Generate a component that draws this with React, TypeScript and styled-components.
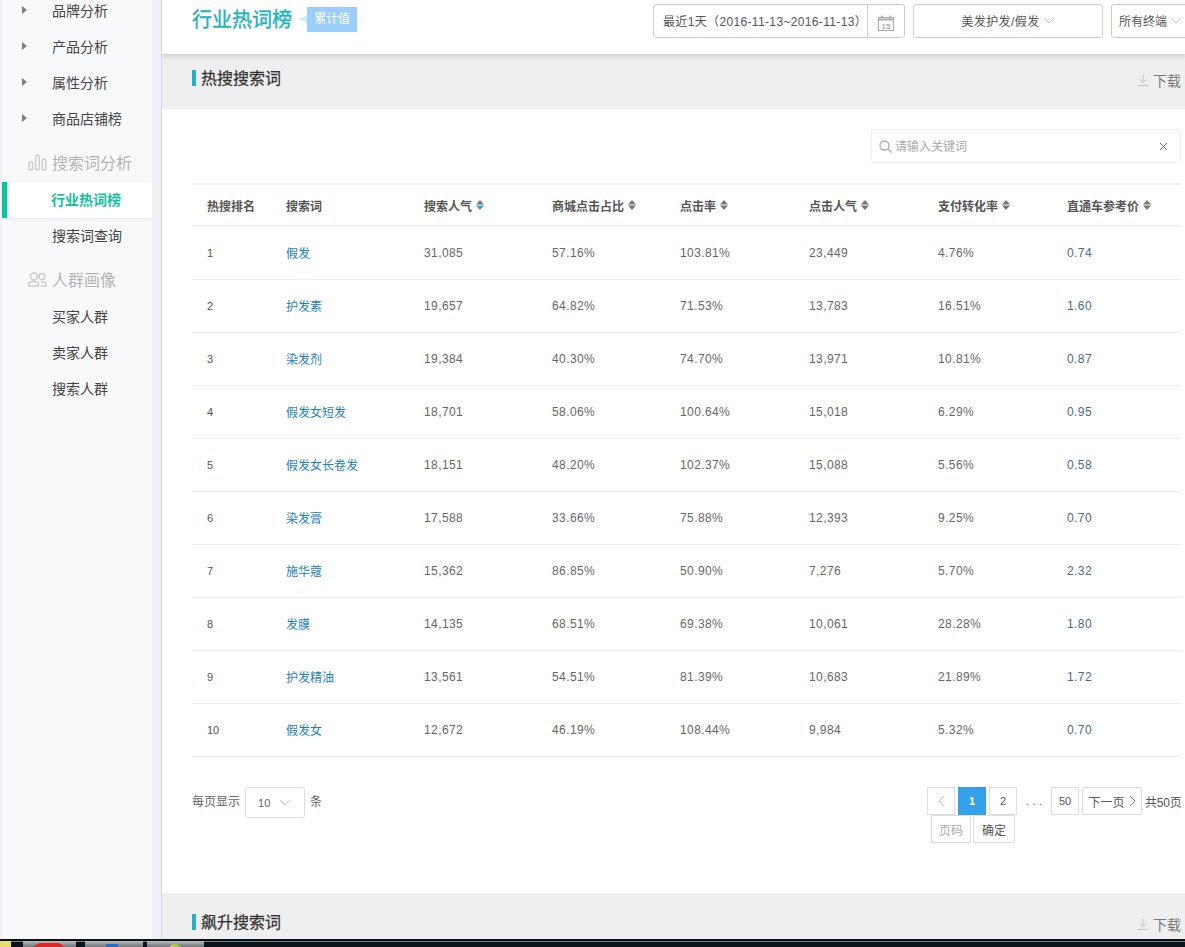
import { ReactNode } from 'react';
import styled, { createGlobalStyle } from 'styled-components';

const FONT = '"Liberation Sans", "Noto Sans CJK SC", sans-serif';

type Row = {
  rank: number;
  word: string;
  search: string;
  mall: string;
  click: string;
  clicks: string;
  pay: string;
  price: string;
};

const rows: Row[] = [
  { rank: 1, word: '假发', search: '31,085', mall: '57.16%', click: '103.81%', clicks: '23,449', pay: '4.76%', price: '0.74' },
  { rank: 2, word: '护发素', search: '19,657', mall: '64.82%', click: '71.53%', clicks: '13,783', pay: '16.51%', price: '1.60' },
  { rank: 3, word: '染发剂', search: '19,384', mall: '40.30%', click: '74.70%', clicks: '13,971', pay: '10.81%', price: '0.87' },
  { rank: 4, word: '假发女短发', search: '18,701', mall: '58.06%', click: '100.64%', clicks: '15,018', pay: '6.29%', price: '0.95' },
  { rank: 5, word: '假发女长卷发', search: '18,151', mall: '48.20%', click: '102.37%', clicks: '15,088', pay: '5.56%', price: '0.58' },
  { rank: 6, word: '染发膏', search: '17,588', mall: '33.66%', click: '75.88%', clicks: '12,393', pay: '9.25%', price: '0.70' },
  { rank: 7, word: '施华蔻', search: '15,362', mall: '86.85%', click: '50.90%', clicks: '7,276', pay: '5.70%', price: '2.32' },
  { rank: 8, word: '发膜', search: '14,135', mall: '68.51%', click: '69.38%', clicks: '10,061', pay: '28.28%', price: '1.80' },
  { rank: 9, word: '护发精油', search: '13,561', mall: '54.51%', click: '81.39%', clicks: '10,683', pay: '21.89%', price: '1.72' },
  { rank: 10, word: '假发女', search: '12,672', mall: '46.19%', click: '108.44%', clicks: '9,984', pay: '5.32%', price: '0.70' },
];

const columns = '94px 138px 128px 128px 129px 129px 129px 114px';

const GlobalStyle = createGlobalStyle`
  html, body {
    margin: 0;
    padding: 0;
    height: 947px;
    overflow: hidden;
    background: #fff;
    font-family: ${FONT};
    font-size: 12px;
    color: #555;
  }
  * { box-sizing: border-box; }
`;

function SortIcon({ active }: { active?: boolean }) {
  return (
    <SortSvg viewBox="0 0 8 10">
      <path d="M4 0 L8 4.5 L0 4.5 Z" fill="#777" />
      <path d="M0 5.5 L8 5.5 L4 10 Z" fill={active ? '#3a9be8' : '#777'} />
    </SortSvg>
  );
}

function Chevron({ color = '#c8c8c8' }: { color?: string }) {
  return (
    <ChevronSvg viewBox="0 0 12 7">
      <path d="M1 1 L6 6 L11 1" fill="none" stroke={color} />
    </ChevronSvg>
  );
}

function DownloadLink() {
  return (
    <Download>
      <svg width="12" height="12" viewBox="0 0 12 12">
        <path d="M6 0.5 V8 M2.5 5 L6 8.5 L9.5 5 M0.5 11.5 H11.5" fill="none" stroke="#c4c4c4" />
      </svg>
      下载
    </Download>
  );
}

function SectionHeader({ children, tall }: { children: ReactNode; tall?: boolean }) {
  return (
    <SectionBar $tall={tall}>
      <SectionTitle>{children}</SectionTitle>
      <DownloadLink />
    </SectionBar>
  );
}

export default function App() {
  return (
    <>
      <GlobalStyle />
      <Page>
        <Body>
          <Sidebar>
            <SideInner>
              <ArrowItem>品牌分析</ArrowItem>
              <ArrowItem>产品分析</ArrowItem>
              <ArrowItem>属性分析</ArrowItem>
              <ArrowItem>商品店铺榜</ArrowItem>
              <GroupTitle>
                <svg width="19" height="17" viewBox="0 0 19 17">
                  <g fill="none" stroke="#cbcbcb" strokeWidth="1.4">
                    <rect x="1" y="8" width="3.6" height="8" rx="1.8" />
                    <rect x="7.6" y="1" width="3.6" height="15" rx="1.8" />
                    <rect x="14.2" y="5" width="3.6" height="11" rx="1.8" />
                  </g>
                </svg>
                搜索词分析
              </GroupTitle>
              <ActiveItem>行业热词榜</ActiveItem>
              <SubItem>搜索词查询</SubItem>
              <GroupTitle $people>
                <svg width="19" height="15" viewBox="0 0 19 15">
                  <g fill="none" stroke="#cbcbcb" strokeWidth="1.5">
                    <circle cx="6" cy="4.5" r="3.4" />
                    <circle cx="14" cy="4.5" r="3" />
                    <path d="M1 14 V12.5 C1 10.5 3 9.5 6 9.5 C9 9.5 10.5 10.5 10.5 12.5 V14 Z" />
                    <path d="M13 9.5 C16 9.5 18 10.5 18 12.5 V14 H12.5" />
                  </g>
                </svg>
                人群画像
              </GroupTitle>
              <SubItem>买家人群</SubItem>
              <SubItem>卖家人群</SubItem>
              <SubItem>搜索人群</SubItem>
            </SideInner>
          </Sidebar>
          <Main>
            <TopBar>
              <TitleGroup>
                <PageTitle>行业热词榜</PageTitle>
                <Tag>累计值</Tag>
              </TitleGroup>
              <TopControls>
                <DateBox>
                  <DateText>最近1天（2016-11-13~2016-11-13）</DateText>
                  <CalendarCell>
                    <svg width="16" height="16" viewBox="0 0 16 16">
                      <rect x="0.5" y="2.5" width="15" height="13" fill="none" stroke="#aaa" />
                      <path d="M0.5 4.5 H15.5" stroke="#aaa" strokeWidth="2" fill="none" />
                      <path d="M4 0.5 V3 M12 0.5 V3" stroke="#888" fill="none" />
                      <text x="8" y="13.5" fontSize="8" textAnchor="middle" fill="#888" fontFamily="Liberation Sans">15</text>
                    </svg>
                  </CalendarCell>
                </DateBox>
                <CategorySelect>美发护发/假发 <Chevron /></CategorySelect>
                <TerminalSelect>所有终端 <Chevron /></TerminalSelect>
              </TopControls>
            </TopBar>
            <SectionHeader>热搜搜索词</SectionHeader>
            <Content>
              <SearchRow>
                <SearchBox>
                  <svg width="13" height="13" viewBox="0 0 13 13">
                    <circle cx="5.5" cy="5.5" r="4.5" fill="none" stroke="#aaa" strokeWidth="1.3" />
                    <path d="M9 9 L12.5 12.5" stroke="#aaa" strokeWidth="1.3" />
                  </svg>
                  <SearchHint>请输入关键词</SearchHint>
                  <svg width="9" height="9" viewBox="0 0 9 9">
                    <path d="M1 1 L8 8 M8 1 L1 8" stroke="#666" />
                  </svg>
                </SearchBox>
              </SearchRow>
              <TableHead>
                <HeadCell>热搜排名</HeadCell>
                <HeadCell>搜索词</HeadCell>
                <HeadCell>搜索人气 <SortIcon active /></HeadCell>
                <HeadCell>商城点击占比 <SortIcon /></HeadCell>
                <HeadCell>点击率 <SortIcon /></HeadCell>
                <HeadCell>点击人气 <SortIcon /></HeadCell>
                <HeadCell>支付转化率 <SortIcon /></HeadCell>
                <HeadCell>直通车参考价 <SortIcon /></HeadCell>
              </TableHead>
              {rows.map((row) => (
                <TableRow key={row.rank}>
                  <RankCell>{row.rank}</RankCell>
                  <WordCell>{row.word}</WordCell>
                  <Cell>{row.search}</Cell>
                  <Cell>{row.mall}</Cell>
                  <Cell>{row.click}</Cell>
                  <Cell>{row.clicks}</Cell>
                  <Cell>{row.pay}</Cell>
                  <PriceCell>{row.price}</PriceCell>
                </TableRow>
              ))}
              <Footer>
                <PageSize>
                  <SizeLabel>每页显示</SizeLabel>
                  <SizeSelect>10 <Chevron /></SizeSelect>
                  <SizeLabel>条</SizeLabel>
                </PageSize>
                <Pager>
                  <PagerLine>
                    <PageButton $muted>
                      <svg width="7" height="12" viewBox="0 0 7 12">
                        <path d="M6 1 L1 6 L6 11" fill="none" stroke="#c8c8c8" />
                      </svg>
                    </PageButton>
                    <PageButton $current>1</PageButton>
                    <PageButton>2</PageButton>
                    <Dots>. . .</Dots>
                    <PageButton>50</PageButton>
                    <NextButton>
                      下一页
                      <svg width="7" height="12" viewBox="0 0 7 12">
                        <path d="M1 1 L6 6 L1 11" fill="none" stroke="#777" />
                      </svg>
                    </NextButton>
                    <PageTotal>共50页</PageTotal>
                  </PagerLine>
                  <JumpLine>
                    <JumpInput>页码</JumpInput>
                    <JumpButton>确定</JumpButton>
                  </JumpLine>
                </Pager>
              </Footer>
            </Content>
            <SectionHeader tall>飙升搜索词</SectionHeader>
          </Main>
        </Body>
        <Taskbar>
          <StartEdge />
          <TaskButton $width={53} $gap={0}><RedBlob /></TaskButton>
          <TaskButton $width={58} $gap={9}><BlueBlob /></TaskButton>
          <TaskButton $width={57} $gap={4}><GreenBlob /></TaskButton>
        </Taskbar>
      </Page>
    </>
  );
}

const Page = styled.div`
  display: flex;
  flex-direction: column;
  width: 1185px;
  height: 947px;
  overflow: hidden;
`;

const Body = styled.div`
  display: flex;
  flex: 1;
  min-height: 0;
`;

const Sidebar = styled.aside`
  flex: 0 0 162px;
  padding-left: 2px;
  background: #eef0f6;
  border-right: 1px solid #d5d7dc;
`;

const SideInner = styled.nav`
  width: 150px;
  height: 100%;
  background: #f8f9fb;
  margin-right: 9px;
  overflow: hidden;
`;

const SubItem = styled.div`
  height: 36px;
  padding-left: 50px;
  line-height: 36px;
  font-size: 14px;
  color: #444;
`;

const ArrowItem = styled(SubItem)`
  position: relative;
  &:first-child { margin-top: -7px; }
  &::before {
    content: '';
    position: absolute;
    left: 20px;
    top: 13px;
    border-left: 5px solid #808080;
    border-top: 4.5px solid transparent;
    border-bottom: 4.5px solid transparent;
  }
`;

const GroupTitle = styled.div<{ $people?: boolean }>`
  display: flex;
  align-items: center;
  gap: 5px;
  height: 36px;
  margin-top: 7px;
  margin-bottom: 2px;
  padding-left: 26px;
  font-size: 16px;
  color: #b4b4b4;
`;

const ActiveItem = styled.div`
  height: 36px;
  padding-left: 44px;
  line-height: 36px;
  font-size: 14px;
  font-weight: 700;
  color: #10c29b;
  background: #fff;
  border-left: 5px solid #00c79c;
  box-shadow: 0 1px 3px rgba(0, 0, 0, 0.08);
`;

const Main = styled.main`
  flex: 1;
  min-width: 0;
  overflow: hidden;
`;

const TopBar = styled.header`
  position: relative;
  z-index: 1;
  display: flex;
  align-items: center;
  height: 54px;
  padding: 0 0 13px 30px;
  background: #fff;
  box-shadow: 0 2px 5px rgba(0, 0, 0, 0.16);
`;

const TitleGroup = styled.div`
  display: flex;
  align-items: center;
  padding-bottom: 2px;
`;

const PageTitle = styled.h1`
  margin: 0 0 2px;
  font-size: 20px;
  font-weight: 400;
  color: #23b2be;
  -webkit-text-stroke: 0.4px #23b2be;
`;

const Tag = styled.span`
  position: relative;
  width: 50px;
  height: 25px;
  margin-left: 15px;
  line-height: 25px;
  text-align: center;
  font-size: 12px;
  color: #fff;
  background: #9ccdff;
  &::before {
    content: '';
    position: absolute;
    left: -9px;
    top: 8px;
    border-right: 9px solid #d6e9fb;
    border-top: 4.5px solid transparent;
    border-bottom: 4.5px solid transparent;
  }
`;

const TopControls = styled.div`
  display: flex;
  gap: 8px;
  margin-left: auto;
  flex: 0 0 532px;
  min-width: 0;
`;

const ControlBox = styled.div`
  display: flex;
  align-items: center;
  height: 34px;
  font-size: 12px;
  color: #555;
  background: #fff;
  border: 1px solid #ccc;
  border-radius: 3px;
`;

const DateBox = styled(ControlBox)`
  flex: 0 0 252px;
  width: 252px;
  min-width: 0;
`;

const DateText = styled.span`
  flex: 1;
  min-width: 0;
  padding-left: 9px;
  letter-spacing: 0.35px;
  white-space: nowrap;
`;

const CalendarCell = styled.span`
  display: flex;
  flex: 0 0 37px;
  align-items: center;
  justify-content: center;
  height: 100%;
  padding-top: 5px;
  border-left: 1px solid #ccc;
`;

const CategorySelect = styled(ControlBox)`
  flex: 0 0 190px;
  justify-content: center;
  gap: 3px;
  letter-spacing: 0.4px;
`;

const TerminalSelect = styled(ControlBox)`
  flex: 0 0 80px;
  padding-left: 7px;
  gap: 3px;
  white-space: nowrap;
`;

const ChevronSvg = styled.svg`
  width: 12px;
  height: 7px;
  flex: none;
`;

const SectionBar = styled.div<{ $tall?: boolean }>`
  display: flex;
  align-items: center;
  justify-content: space-between;
  height: ${({ $tall }) => ($tall ? '46px' : '55px')};
  padding: ${({ $tall }) => ($tall ? '12px 4px 0 30px' : '0 4px 7px 30px')};
  background: #efefef;
`;

const SectionTitle = styled.h2`
  margin: 0;
  padding-left: 5px;
  border-left: 4px solid #23b2be;
  height: 16px;
  line-height: 18px;
  font-size: 16px;
  font-weight: 400;
  color: #333;
  -webkit-text-stroke: 0.25px #333;
`;

const Download = styled.span`
  display: flex;
  align-items: center;
  gap: 4px;
  margin-top: 4px;
  font-size: 14px;
  color: #777;
`;

const Content = styled.section`
  height: 784px;
  padding: 0 4px 0 30px;
  background: #fff;
`;

const SearchRow = styled.div`
  display: flex;
  justify-content: flex-end;
  padding-top: 20px;
`;

const SearchBox = styled.div`
  display: flex;
  align-items: center;
  width: 310px;
  height: 34px;
  padding: 0 12px 0 7px;
  border: 1px solid #eee;
  border-radius: 3px;
`;

const SearchHint = styled.span`
  flex: 1;
  margin-left: 3px;
  padding-bottom: 2px;
  font-size: 12px;
  color: #aaa;
`;

const TableHead = styled.div`
  display: grid;
  grid-template-columns: ${columns};
  align-items: center;
  height: 44px;
  margin-top: 20px;
  border-top: 2px solid #f0f0f0;
  border-bottom: 2px solid #f0f0f0;
`;

const HeadCell = styled.div`
  display: flex;
  align-items: center;
  gap: 4px;
  font-size: 12px;
  font-weight: 700;
  color: #555;
  white-space: nowrap;
  &:first-child { padding-left: 15px; }
`;

const SortSvg = styled.svg`
  width: 8px;
  height: 10px;
  flex: none;
`;

const TableRow = styled.div`
  display: grid;
  grid-template-columns: ${columns};
  align-items: center;
  height: 53px;
  border-bottom: 1px solid #eee;
`;

const Cell = styled.div`
  font-size: 12px;
  letter-spacing: 0.4px;
  color: #666;
`;

const RankCell = styled(Cell)`
  padding-left: 15px;
  font-size: 11px;
  letter-spacing: 0;
  color: #555;
`;

const WordCell = styled(Cell)`
  padding-bottom: 2px;
  letter-spacing: 0;
  color: #1c80c4;
`;

const PriceCell = styled(Cell)`
  color: #4a6a8a;
`;

const Footer = styled.div`
  display: flex;
  justify-content: space-between;
  padding-top: 30px;
`;

const PageSize = styled.div`
  display: flex;
  align-items: center;
  gap: 5px;
  height: 31px;
  font-size: 12px;
  color: #666;
`;

const SizeLabel = styled.span`
  padding-bottom: 4px;
`;

const SizeSelect = styled.div`
  display: flex;
  align-items: center;
  gap: 9px;
  width: 60px;
  height: 31px;
  padding-left: 12px;
  font-size: 11px;
  border: 1px solid #ddd;
  border-radius: 3px;
`;

const Pager = styled.div`
  width: 254px;
  font-size: 12px;
`;

const PagerLine = styled.div`
  display: flex;
  align-items: center;
  gap: 3px;
`;

const PageButton = styled.div<{ $current?: boolean; $muted?: boolean }>`
  display: flex;
  flex: none;
  align-items: center;
  justify-content: center;
  width: 28px;
  height: 28px;
  font-size: 11px;
  font-weight: ${({ $current }) => ($current ? 700 : 400)};
  color: ${({ $current }) => ($current ? '#fff' : '#555')};
  background: ${({ $current }) => ($current ? '#35a0ea' : '#fff')};
  border: 1px solid ${({ $current }) => ($current ? '#35a0ea' : '#ddd')};
`;

const NextButton = styled(PageButton)`
  gap: 4px;
  width: 60px;
  font-size: 12px;
`;

const Dots = styled.span`
  flex: none;
  width: 28px;
  text-align: center;
  color: #777;
`;

const PageTotal = styled.span`
  flex: none;
  width: 36px;
  letter-spacing: -0.2px;
  white-space: nowrap;
  color: #555;
`;

const JumpLine = styled.div`
  display: flex;
  gap: 2px;
  padding-left: 4px;
`;

const JumpBox = styled.div`
  display: flex;
  align-items: center;
  justify-content: center;
  height: 28px;
  font-size: 12px;
  border: 1px solid #ddd;
`;

const JumpInput = styled(JumpBox)`
  width: 40px;
  color: #aaa;
`;

const JumpButton = styled(JumpBox)`
  width: 42px;
  color: #555;
`;

const Taskbar = styled.footer`
  display: flex;
  flex: 0 0 8px;
  align-items: flex-start;
  overflow: hidden;
  background: linear-gradient(#0c1014 0 2px, #6f7c86 2px 3px, #0b1218 3px);
`;

const StartEdge = styled.div`
  flex: 0 0 23px;
  height: 6px;
  margin-top: 2px;
  background: linear-gradient(90deg, #e8dc6a 0 11px, transparent 11px);
`;

const TaskButton = styled.div<{ $width: number; $gap: number }>`
  position: relative;
  flex: 0 0 ${({ $width }) => $width}px;
  height: 6px;
  margin: 2px 0 0 ${({ $gap }) => $gap}px;
  background: linear-gradient(#b8bcbe, #6f7478);
  overflow: hidden;
`;

const Blob = styled.div`
  position: absolute;
  top: 2px;
  height: 20px;
`;

const RedBlob = styled(Blob)`
  left: 10px;
  width: 32px;
  border-radius: 8px 8px 0 0;
  background: #e8232a;
`;

const BlueBlob = styled(Blob)`
  top: 3px;
  left: 15px;
  width: 18px;
  background: linear-gradient(100deg, transparent 30%, #2470c0 30%);
`;

const GreenBlob = styled(Blob)`
  top: 3px;
  left: 21px;
  width: 15px;
  border-radius: 7px 7px 0 0;
  background: linear-gradient(90deg, #e4d860, #5fb840);
`;
